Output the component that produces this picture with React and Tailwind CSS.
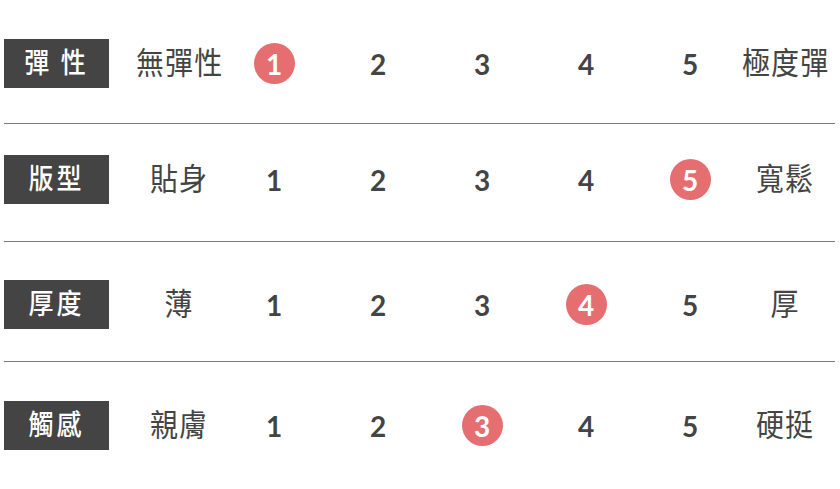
const rows = [
  { label: '彈 性', low: '無彈性', high: '極度彈', value: 1, pad: 'pt-[39px] pb-[35px]' },
  { label: '版型', low: '貼身', high: '寬鬆', value: 5, pad: 'pt-[31px] pb-[37px]' },
  { label: '厚度', low: '薄', high: '厚', value: 4, pad: 'pt-[38px] pb-[32px]' },
  { label: '觸感', low: '親膚', high: '硬挺', value: 3, pad: 'pt-[39px] pb-[40px]' },
];

const cjk = "font-['Noto_Sans_CJK_TC','Noto_Sans',sans-serif]";

function Row({ row, last }) {
  return (
    <div className={`${row.pad} ${last ? '' : 'border-b border-[#7a7a7a]'}`}>
      <div className="flex items-center h-[49px]">
        <div className={`w-[105px] h-[49px] bg-[#444444] text-white flex items-center justify-center text-[25px] font-medium tracking-[0.12em] leading-none ${cjk}`}>
          <span className="inline-block scale-y-[1.12] -translate-y-[2px]">{row.label}</span>
        </div>
        <div className={`ml-[27px] w-[86px] text-center text-[28px] text-[#444444] tracking-[0.04em] whitespace-nowrap leading-none ${cjk}`}>
          <span className="inline-block scale-y-[1.1] -translate-y-[3px]">{row.low}</span>
        </div>
        {[1, 2, 3, 4, 5].map((n) => (
          <div key={n} className="w-[104px] flex justify-center">
            {n === row.value ? (
              <span className="w-[41px] h-[41px] rounded-full bg-[#e46e70] text-white flex items-center justify-center text-[28px] font-bold font-['Lato',sans-serif]">
                {n}
              </span>
            ) : (
              <span className="text-[28px] font-bold text-[#444444] font-['Lato',sans-serif]">{n}</span>
            )}
          </div>
        ))}
        <div className={`w-[86px] text-center text-[28px] text-[#444444] tracking-[0.04em] whitespace-nowrap leading-none ${cjk}`}>
          <span className="inline-block scale-y-[1.1] -translate-y-[3px]">{row.high}</span>
        </div>
      </div>
    </div>
  );
}

export default function App() {
  return (
    <div className="w-[840px] h-[489px] bg-white overflow-hidden">
      <div className="ml-[4px] w-[831px]">
        {rows.map((row, i) => (
          <Row key={i} row={row} last={i === rows.length - 1} />
        ))}
      </div>
    </div>
  );
}
